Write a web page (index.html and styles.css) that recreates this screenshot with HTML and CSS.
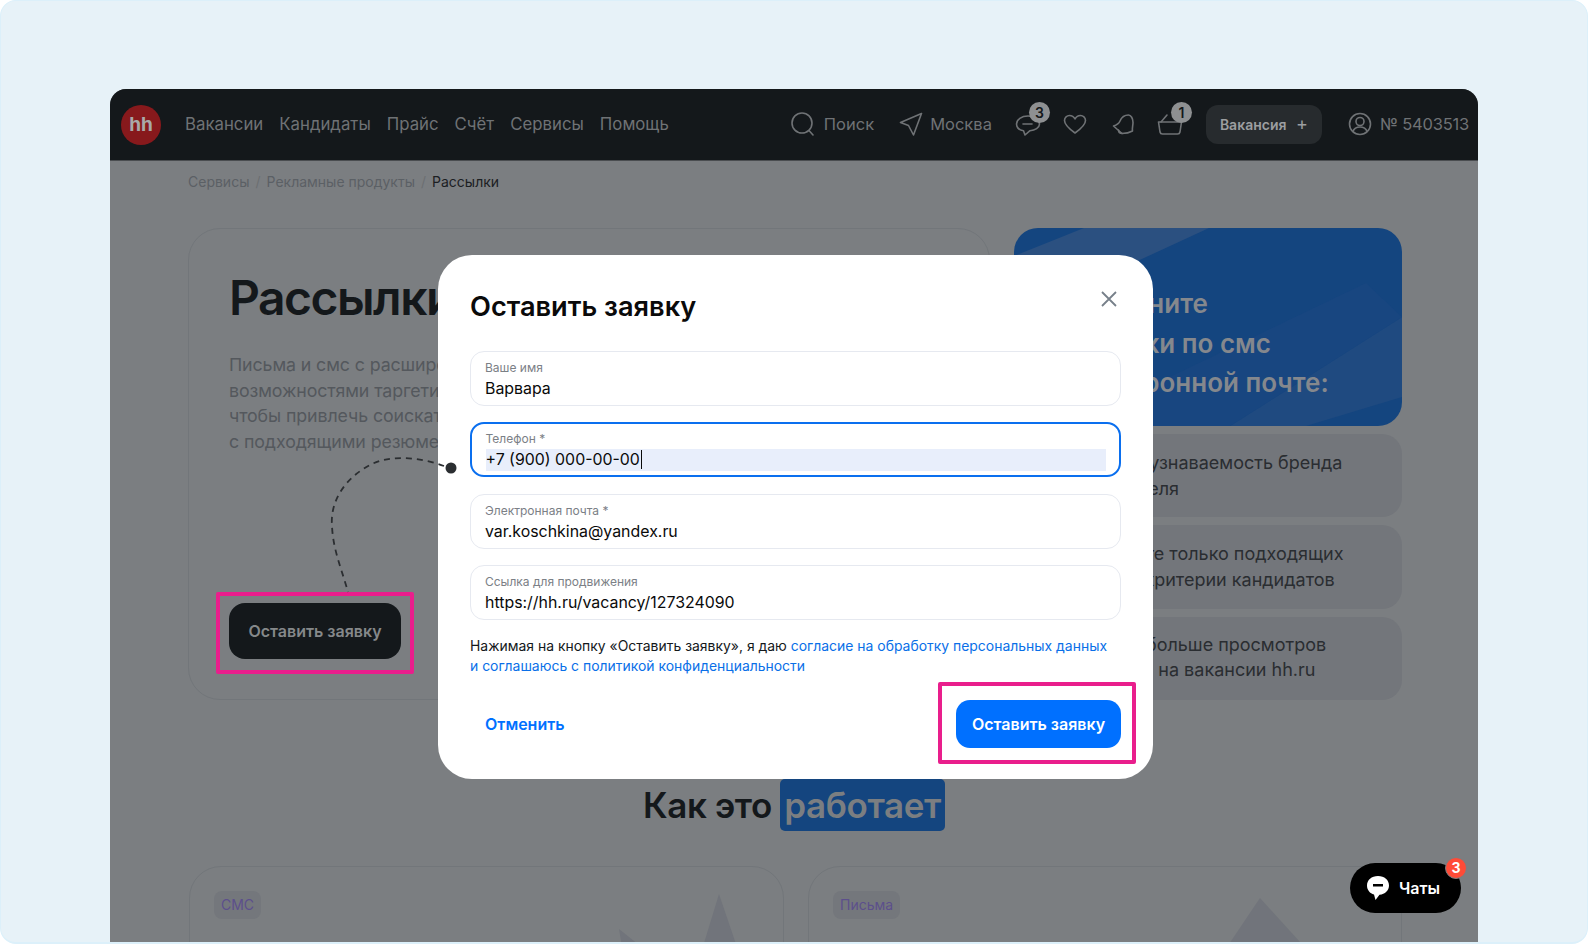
FILE: index.html
```html
<!DOCTYPE html>
<html lang="ru">
<head>
  <meta charset="UTF-8">
  <title>Рассылки</title>
  <link rel="stylesheet" href="styles.css">
</head>
<body>
  <div class="shot">
    <div class="window">
      <header class="topbar">
        <div class="logo">hh</div>
        <nav class="nav">
          <a>Вакансии</a>
          <a>Кандидаты</a>
          <a>Прайс</a>
          <a>Счёт</a>
          <a>Сервисы</a>
          <a>Помощь</a>
        </nav>
        <div class="tools">
          <a class="tool tool-search">
            <svg width="24" height="24" viewBox="0 0 24 24" class="ico"><circle cx="11" cy="11" r="10"/><path d="M18 18.5l4 4.500"/></svg>
            Поиск
          </a>
          <a class="tool tool-city">
            <svg width="24" height="24" viewBox="0 0 24 24" class="ico"><path d="M22.5 1.500L1.500 10.500l8 3 5 9.500z"/></svg>
            Москва
          </a>
          <span class="icon-btn icon-chat">
            <svg width="26" height="24" viewBox="0 0 26 24" class="ico"><path d="M13 4C6.500 4 1.500 7.500 1.500 12c0 3.500 3 6 7 6.800L10 23l5-4.300c5-.5 9.500-3 9.500-6.700C24.500 7.500 19.500 4 13 4z"/><path d="M8 12h9"/></svg>
            <b class="count">3</b>
          </span>
          <span class="icon-btn icon-heart">
            <svg width="24" height="24" viewBox="0 0 24 24" class="ico"><path d="M12 21C5 16 1.500 12.500 1.500 8.500 1.500 5.500 4 3.500 6.500 3.500c2.300 0 4.300 1.200 5.500 3.500 1.200-2.300 3.200-3.500 5.500-3.500 2.500 0 5 2 5 5C22.500 12.500 19 16 12 21z"/></svg>
          </span>
          <span class="icon-btn icon-bell">
            <svg width="24" height="24" viewBox="0 0 24 24" class="ico"><path d="M16.500 3C12.500 3 9.500 5.500 8 9c-1 2.500-3.500 4-6.500 5l8.500 7.500c3 0 7-.5 10.500-2.500-.5-3 .5-5.500.5-8.500 0-4-2-7.500-4.500-7.500z"/><path d="M6.500 18c0 2 1.500 3.500 3.800 3.500"/></svg>
          </span>
          <span class="icon-btn icon-cart">
            <svg width="26" height="24" viewBox="0 0 26 24" class="ico"><path d="M1.500 10h23l-1.500 10a2.500 2.500 0 0 1-2.500 2h-15a2.500 2.500 0 0 1-2.500-2z"/><path d="M4 10l6-7"/></svg>
            <b class="count">1</b>
          </span>
          <button class="add-btn">Вакансия <span class="plus">+</span></button>
          <a class="tool tool-user">
            <svg width="24" height="24" viewBox="0 0 24 24" class="ico"><circle cx="12" cy="12" r="10.500"/><circle cx="12" cy="9.500" r="4"/><path d="M5 19.500c1-3 3.500-4.500 7-4.500s6 1.500 7 4.500"/></svg>
            № 5403513
          </a>
        </div>
      </header>

      <div class="crumbs">
        <a>Сервисы</a><i>/</i><a>Рекламные продукты</a><i>/</i><span>Рассылки</span>
      </div>

      <section class="promo">
        <div class="promo-card">
          <h1>Рассылки</h1>
          <p>Письма и смс с расширенными<br>возможностями таргетинга,<br>чтобы привлечь соискателей<br>с подходящими резюме</p>
          <button class="dark-btn">Оставить заявку</button>
        </div>
        <aside class="promo-side">
          <div class="side-banner">
            <svg class="banner-rays" viewBox="0 0 388 198" preserveAspectRatio="none">
              <path d="M0 28L70 0h125L0 90z" fill="#2b5080"/>
              <path d="M388 89L216 198h76l96-29z" fill="#1f4a80"/>
              <path d="M352 55L139 157 100 198h116L388 89z" fill="#184680"/>
            </svg>
            <h2>Объедините<br>рассылки по смс<br>и электронной почте:</h2>
          </div>
          <div class="side-item">Повысите узнаваемость бренда<br>работодателя</div>
          <div class="side-item">Подбирайте только подходящих<br>настроив критерии кандидатов</div>
          <div class="side-item side-item-last">Получите больше просмотров<br>и откликов на вакансии hh.ru</div>
        </aside>
      </section>

      <h2 class="how">Как это <span>работает</span></h2>

      <section class="steps">
        <div class="step">
          <span class="tag">СМС</span>
          <svg class="step-art" width="160" height="60" viewBox="0 0 160 60"><path d="M106 1l20 59H88z" fill="#71747b"/><path d="M6 36l30 24H10z" fill="#71747b"/></svg>
        </div>
        <div class="step">
          <span class="tag">Письма</span>
          <svg class="step-art" width="160" height="60" viewBox="0 0 160 60"><path d="M29 5l50 55H-8z" fill="#71747b"/></svg>
        </div>
      </section>
    </div>

    <div class="hint hint-left"></div>

    <div class="modal">
      <button class="modal-close" aria-label="Закрыть">
        <svg width="16" height="16" viewBox="0 0 16 16"><path d="M1 1l14 14M15 1L1 15" stroke="#77808a" stroke-width="1.800" fill="none"/></svg>
      </button>
      <h3>Оставить заявку</h3>
      <div class="fields">
        <div class="field">
          <label>Ваше имя</label>
          <div class="value">Варвара</div>
        </div>
        <div class="field field-active">
          <label>Телефон *</label>
          <div class="value value-selected"><span class="caret">+7 (900) 000-00-00</span></div>
        </div>
        <div class="field">
          <label>Электронная почта *</label>
          <div class="value">var.koschkina@yandex.ru</div>
        </div>
        <div class="field">
          <label>Ссылка для продвижения</label>
          <div class="value">https://hh.ru/vacancy/127324090</div>
        </div>
      </div>
      <p class="legal">Нажимая на кнопку «Оставить заявку», я даю <a>согласие на обработку персональных данных</a><br><a>и соглашаюсь с политикой конфиденциальности</a></p>
      <div class="modal-actions">
        <button class="link-btn">Отменить</button>
        <button class="blue-btn">Оставить заявку</button>
      </div>
      <div class="hint hint-right"></div>
    </div>

    <svg class="trail" width="140" height="150" viewBox="0 0 140 150">
      <path d="M122 16C100 8 70 4 50 14 22 28 8 52 10 76c1 24 10 44 16 66" fill="none" stroke="#2b2e31" stroke-width="1.800" stroke-dasharray="6 5"/>
      <circle cx="129" cy="18" r="5.500" fill="#2b2e31"/>
    </svg>

    <button class="chat-pill">
      <svg width="24" height="26" viewBox="0 0 24 26"><path d="M12 1C5.500 1 1 5 1 10.500c0 4.500 3 8 7 9l1.500 5.500 4-5.200C19 19.300 23 15.500 23 10.500 23 5 18.500 1 12 1z" fill="#fff"/><rect x="7" y="9" width="10" height="2.500" fill="#000"/></svg>
      Чаты
      <b class="chat-count">3</b>
    </button>
  </div>
</body>
</html>
```
FILE: styles.css
```css
* {
  box-sizing: border-box;
}
html, body {
  margin: 0;
  padding: 0;
}
body {
  font-family: 'Inter', 'Noto Sans', sans-serif;
  background: #fff;
}
button {
  font-family: inherit;
  border: none;
  cursor: pointer;
}

.shot {
  position: relative;
  width: 1588px;
  height: 944px;
  padding: 88px 109px 0;
  overflow: hidden;
  background: #e7f2f8;
  border: 1px solid #dcf0fa;
  border-bottom-width: 2px;
  border-radius: 16px;
}
.window {
  height: 100%;
  overflow: hidden;
  background: #7b7e81;
  border-radius: 16px 16px 0 0;
}

/* header */
.topbar {
  display: flex;
  align-items: center;
  height: 72px;
  padding: 0 9px 0 11px;
  background: #14181b;
  color: #6f7275;
  font-size: 16.8px;
  border-bottom: 1px solid #4a4d50;
}
.logo {
  flex: none;
  width: 40px;
  height: 40px;
  border-radius: 50%;
  background: #87191c;
  color: #a9a9a9;
  font-weight: 700;
  font-size: 19px;
  line-height: 40px;
  text-align: center;
  margin-right: 24px;
}
.nav {
  display: flex;
  gap: 16px;
  margin-top: -2px;
}
.tools {
  display: flex;
  align-items: center;
  margin-left: auto;
  margin-top: -2px;
  font-size: 16.5px;
}
.tool {
  display: flex;
  align-items: center;
}
.tool-search {
  gap: 9px;
  margin-right: 25px;
}
.tool-city {
  gap: 7px;
  margin-right: 23px;
}
.tool-user {
  gap: 8px;
  letter-spacing: -0.2px;
}
.ico {
  fill: none;
  stroke: #6f7275;
  stroke-width: 1.6;
  stroke-linejoin: round;
  stroke-linecap: round;
}
.icon-btn {
  position: relative;
  display: block;
  height: 24px;
  margin-right: 22px;
}
.icon-heart {
  margin-right: 25px;
}
.icon-bell {
  margin-right: 21px;
}
.icon-btn svg {
  display: block;
}
.count {
  position: absolute;
  top: -10px;
  left: 14px;
  width: 21px;
  height: 21px;
  border-radius: 50%;
  background: #8e9092;
  color: #14181b;
  font-size: 14px;
  font-weight: 600;
  line-height: 21px;
  text-align: center;
}
.add-btn {
  height: 39px;
  width: 116px;
  margin-top: 2px;
  margin-right: 26px;
  margin-left: 1px;
  padding: 0 0 2px;
  border-radius: 12px;
  background: #272b2e;
  color: #9c9ea0;
  font-size: 14px;
  font-weight: 600;
}
.plus {
  font-size: 18px;
  font-weight: 400;
  margin-left: 6px;
}

/* breadcrumbs */
.crumbs {
  padding: 11px 0 0 78px;
  height: 67px;
  font-size: 14px;
  line-height: 20px;
  color: #5b6065;
}
.crumbs i {
  margin: 0 6px;
  font-style: normal;
  color: #6c6f72;
}
.crumbs span {
  color: #1c2023;
}

/* promo block */
.promo {
  display: grid;
  grid-template-columns: 802px 388px;
  gap: 24px;
  padding-left: 78px;
  height: 471px;
}
.promo-card {
  padding: 40px;
  border: 1px solid #72767a;
  border-radius: 32px;
}
.promo-card h1 {
  margin: 0;
  font-size: 48px;
  font-weight: 600;
  line-height: 58px;
  letter-spacing: -1.5px;
  color: #14181b;
}
.promo-card p {
  margin: 25px 0 0;
  font-size: 17.8px;
  line-height: 25.6px;
  letter-spacing: -0.1px;
  color: #54585d;
}
.dark-btn {
  display: block;
  width: 172px;
  height: 56px;
  margin-top: 149px;
  border-radius: 16px;
  background: #14181b;
  color: #85888a;
  font-size: 16px;
  font-weight: 600;
}
.promo-side {
  display: flex;
  flex-direction: column;
  gap: 8px;
}
.side-banner {
  position: relative;
  flex: none;
  height: 198px;
  padding: 56px 33px 0;
  border-radius: 24px;
  background: #14457f;
  overflow: hidden;
}
.banner-rays {
  position: absolute;
  top: 0;
  left: 0;
  width: 100%;
  height: 100%;
}
.side-banner h2 {
  position: relative;
  margin: 0;
  font-size: 26px;
  font-weight: 600;
  line-height: 39.5px;
  color: #85888d;
}
.side-item {
  flex: none;
  height: 83.3px;
  padding: 16px 24px 16px 43px;
  border-radius: 20px;
  background: #73767b;
  font-size: 18px;
  line-height: 25.6px;
  color: #2a2d31;
}
.side-item-last {
  padding-top: 15px;
}

/* how it works */
.how {
  margin: 80px 0 0;
  height: 52px;
  text-align: center;
  font-size: 35px;
  font-weight: 600;
  line-height: 52px;
  letter-spacing: -0.4px;
  color: #14181b;
}
.how span {
  display: inline-block;
  padding: 0 4px;
  border-radius: 5px;
  background: #14457f;
  color: #7b7e81;
}
.steps {
  display: grid;
  grid-template-columns: 595px 594px;
  gap: 24px;
  margin-top: 35px;
  padding-left: 79px;
}
.step {
  position: relative;
  height: 200px;
  padding: 24px;
  border: 1px solid #72767a;
  border-radius: 32px;
  overflow: hidden;
}
.tag {
  display: inline-block;
  height: 28px;
  padding: 0 7px;
  border-radius: 8px;
  background: #74777c;
  color: #5c4f8c;
  font-size: 14px;
  line-height: 28px;
}
.step-art {
  position: absolute;
  top: 26px;
  right: 10px;
  overflow: visible;
}

/* overlay pieces */
.trail {
  position: absolute;
  top: 449px;
  left: 321px;
}
.hint {
  position: absolute;
  border: 4px solid #e91e8c;
  border-radius: 2px;
}
.hint-left {
  left: 215px;
  top: 591px;
  width: 198px;
  height: 82px;
}
.hint-right {
  left: 500px;
  top: 427px;
  width: 198px;
  height: 82px;
}

/* modal */
.modal {
  position: absolute;
  left: 437px;
  top: 254px;
  width: 715px;
  height: 524px;
  padding: 34px 32px 32px;
  border-radius: 34px;
  background: #fff;
}
.modal h3 {
  margin: 0;
  font-size: 27.2px;
  font-weight: 600;
  line-height: 36px;
  color: #0a0a0a;
}
.modal-close {
  position: absolute;
  top: 36px;
  right: 36px;
  padding: 0;
  width: 16px;
  height: 16px;
  background: none;
}
.modal-close svg {
  display: block;
}
.fields {
  display: flex;
  flex-direction: column;
  gap: 16.3px;
  margin-top: 26px;
}
.field {
  height: 55px;
  padding: 8px 14px 0;
  border: 1.5px solid #e6e9f0;
  border-radius: 14px;
}
.field-active {
  border: 2px solid #0a6fef;
  padding: 7px 13.5px 0;
}
.field label {
  display: block;
  font-size: 12px;
  line-height: 16px;
  color: #7b8086;
}
.value {
  font-size: 15.9px;
  line-height: 22px;
  padding-top: 2px;
  color: #0a0a0a;
}
.value-selected {
  margin-top: 1.5px;
  padding-top: 0;
  background: #e8eefb;
}
.caret {
  border-right: 1px solid #0a0a0a;
  padding-right: 1px;
}
.legal {
  margin: 16px 0 0;
  font-size: 13.95px;
  line-height: 20px;
  color: #14181b;
}
.legal a {
  color: #0a6fe8;
}
.modal-actions {
  display: flex;
  align-items: center;
  justify-content: space-between;
  margin-top: 24px;
}
.link-btn {
  padding: 0 16px 0 15px;
  height: 48px;
  background: none;
  color: #0070ff;
  font-size: 16px;
  font-weight: 600;
}
.blue-btn {
  width: 165px;
  height: 48px;
  border-radius: 14px;
  background: #0070ff;
  color: #fff;
  font-size: 16px;
  font-weight: 600;
}

/* chat */
.chat-pill {
  position: absolute;
  left: 1349px;
  top: 862px;
  display: flex;
  align-items: center;
  gap: 9px;
  width: 111px;
  height: 50px;
  padding: 0 0 0 16px;
  border-radius: 25px;
  background: #000;
  color: #fff;
  font-size: 16px;
  font-weight: 600;
}
.chat-count {
  position: absolute;
  top: -6px;
  right: -6px;
  width: 22px;
  height: 22px;
  border-radius: 50%;
  border: 1px solid #7b7e81;
  background: #ff4b37;
  color: #fff;
  font-size: 14px;
  font-weight: 700;
  line-height: 20px;
  text-align: center;
}
```
